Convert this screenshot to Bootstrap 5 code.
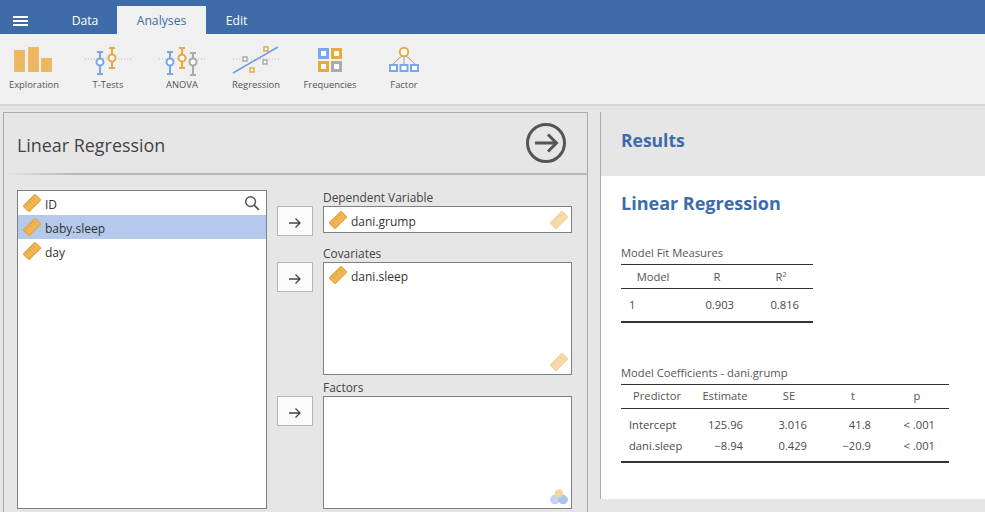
<!DOCTYPE html>
<html lang="en">
<head>
<meta charset="utf-8">
<title>Linear Regression</title>
<link href="https://cdn.jsdelivr.net/npm/bootstrap@5.3.0/dist/css/bootstrap.min.css" rel="stylesheet">
<style>
html,body{height:512px;overflow:hidden}
body{font-family:"Open Sans","Noto Sans",sans-serif;background:#e6e6e6;color:#333;font-size:13px}
.topbar{height:34px;background:#3e6ca8}
.burger{width:54px;padding:16px 0 0 13px;display:flex;flex-direction:column;gap:2px}
.burger span{display:block;width:15px;height:2px;background:#fff}
.tabitem{height:28px;line-height:29px;text-align:center;color:#fff;font-size:12.2px;margin-top:6px}
.tab-data{width:62px}.tab-analyses{width:89px;background:#f0f0f0;color:#3e6ca8;margin-left:1px}.tab-edit{width:60px;padding-left:1px}
.ribbon{height:72px;background:#f0f0f0;border-bottom:2px solid #d5d5d5}
.tool{height:70px;color:#555;font-size:9.4px;text-align:center;line-height:14px}
.tool svg{display:block;margin:10px auto 0}
.t1{width:68px}.t2{width:80px}.t3{width:68px}.t4{width:76px;margin-left:2px}.t5{width:72px}.t6{width:76px}
.work{height:406px;padding-top:6px}
.leftpanel{width:585px;margin-left:3px;border:1px solid #acacac;border-bottom:0;height:400px;overflow:hidden}
.panelhead{height:62px;padding:0 20px 0 13px;border-bottom:2px solid #b8b8b8;border-image:linear-gradient(90deg,#e6e6e6,#b8b8b8 12%) 1}
.paneltitle{font-size:17.9px;color:#444;margin:0;font-weight:400;padding-top:6px}
.panelbody{padding:15px 0 0 13px;gap:10px}
.varlist{width:250px;height:319px;background:#fff;border:1px solid #808080}
.varitem{height:24px;padding-left:5px;gap:4px;font-size:12px;color:#333}
.varname{padding-top:4px}
.varitem.sel{background:#b4c9ec}
.varsearch{margin-left:auto;margin-right:6px}
.assign{display:grid;grid-template-columns:36px 249px;column-gap:10px;align-content:start}
.fieldlabel{grid-column:2;font-size:11.9px;line-height:15px;height:16px;padding-bottom:1px;color:#444}
.mover{width:36px;height:30px;padding:0;border:1px solid #b5b5b5;background:#fafafa;border-radius:0;color:#444;line-height:1}
.mover:hover{background:#fff;border-color:#999}
.dropbox{position:relative;background:#fff;border:1px solid #808080;padding:1px 5px;gap:4px;font-size:12px;align-self:start}
.d1{height:27px}.d2{height:113px}.d3{height:113px}
.gapa{grid-column:1/3;height:10px}.gapb{grid-column:1/3;height:5px}
.iconlift{margin-top:2px}.textlift{margin-top:4px}
.boxmark{position:absolute;right:3px;bottom:3px}
.rightpanel{width:385px;margin-left:12px;border-left:1px solid #acacac;height:387px}
.reshead{height:64px;padding:15px 20px 0;font-size:17.5px;font-weight:700;color:#3e6ca8}
.resbody{height:323px;background:#fff;padding:14px 20px 0}
.restitle{font-size:18px;font-weight:700;color:#3e6ca8;margin:0;line-height:26px}
.restable{font-size:11.2px;color:#4a4a4a;border-collapse:collapse;table-layout:fixed}
.restable caption{caption-side:top;padding:0 0 4px;color:#555;font-size:11.2px;line-height:15px}
.restable th{font-weight:400;border-top:1px solid #333;border-bottom:1px solid #333;text-align:center;height:24px;padding:1px 0 0;color:#555}
.restable td{padding:1px 0 0;text-align:right}
.restable td:first-child{text-align:left;padding-left:8px}
.fit{width:192px;margin-top:29px}
.fit td{height:33px}
.fit td:nth-child(2){padding-right:15px}
.fit td:nth-child(3){padding-right:14px}
.fit tr:last-child td{border-bottom:2px solid #333}
.coef{width:328px;margin-top:42px}
.coef td:nth-child(n+2){padding-right:14px}
.coef tbody tr:first-child td{padding-top:7px;height:27px}
.coef tbody tr:last-child td{padding-top:2px;padding-bottom:5px;height:27px;border-bottom:2px solid #333}
.colm{width:64px}.colp{width:72px}
</style>
</head>
<body>
<svg width="0" height="0" class="d-block position-absolute">
<defs>
<symbol id="ruler" viewBox="0 0 18 18"><g transform="rotate(-45 9 9)"><rect x="0.7" y="4.900" width="16.6" height="8.200" rx="0.8" fill="#f0b655" stroke="#e5a336" stroke-width="1"/><path d="M3.500 5.400v3M6 5.400v2M8.500 5.400v3M11 5.400v2M13.500 5.400v3" stroke="#cf9230" stroke-width=".7" fill="none"/></g></symbol>
</defs>
</svg>
<div class="topbar d-flex">
  <div class="burger"><span></span><span></span><span></span></div>
  <div class="tabitem tab-data">Data</div>
  <div class="tabitem tab-analyses">Analyses</div>
  <div class="tabitem tab-edit">Edit</div>
</div>
<div class="ribbon d-flex">
  <div class="tool t1"><svg width="40" height="34" viewBox="0 0 40 34"><g fill="#ecb75f" stroke="#eabb6c"><rect x="0.500" y="6.500" width="10" height="21"/><rect x="14.500" y="3.500" width="10" height="24"/><rect x="27.500" y="14.500" width="10" height="13"/></g></svg>Exploration</div>
  <div class="tool t2"><svg width="50" height="34" viewBox="0 0 50 34"><path d="M2 15h46" stroke="#bbb" stroke-dasharray="1 2" fill="none"/><g fill="none" stroke-width="2"><path d="M17 8v22M14 8h6M14 30h6" stroke="#7aa3e8"/><circle cx="17" cy="18" r="3.500" fill="#fff" stroke="#7aa3e8"/><path d="M29 4v20M26 4h6M26 24h6" stroke="#e9a93f"/><circle cx="29" cy="14" r="3.500" fill="#fff" stroke="#e9a93f"/></g></svg>T-Tests</div>
  <div class="tool t3"><svg width="50" height="34" viewBox="0 0 50 34"><path d="M2 15h46" stroke="#bbb" stroke-dasharray="1 2" fill="none"/><g fill="none" stroke-width="2"><path d="M13 8v22M10 8h6M10 30h6" stroke="#7aa3e8"/><circle cx="13" cy="18" r="3.500" fill="#fff" stroke="#7aa3e8"/><path d="M25 4v20M22 4h6M22 24h6" stroke="#e9a93f"/><circle cx="25" cy="14" r="3.500" fill="#fff" stroke="#e9a93f"/><path d="M36 9v22M33 9h6M33 31h6" stroke="#aaa"/><circle cx="36" cy="18" r="3.500" fill="#fff" stroke="#aaa"/></g></svg>ANOVA</div>
  <div class="tool t4"><svg width="48" height="34" viewBox="0 0 48 34"><path d="M1 15h46" stroke="#bbb" stroke-dasharray="1 2" fill="none"/><path d="M1 29L46 3" stroke="#6f9be4" stroke-width="1.500" fill="none"/><g fill="#fff" stroke-width="1.500"><rect x="11" y="13" width="4" height="4" stroke="#aaa"/><rect x="31" y="16" width="4" height="4" stroke="#aaa"/><rect x="32" y="3" width="4" height="4" stroke="#e9a93f"/><rect x="18" y="24" width="4" height="4" stroke="#e9a93f"/></g></svg>Regression</div>
  <div class="tool t5"><svg width="26" height="34" viewBox="0 0 26 34"><g fill="#fff" stroke-width="3"><rect x="2.500" y="5.500" width="8" height="8" stroke="#7aa7ec"/><rect x="15.500" y="5.500" width="8" height="8" stroke="#e9a93f"/><rect x="2.500" y="18.500" width="8" height="8" stroke="#e9a93f"/><rect x="15.500" y="18.500" width="8" height="8" stroke="#aaa"/></g></svg>Frequencies</div>
  <div class="tool t6"><svg width="34" height="34" viewBox="0 0 34 34"><path d="M17 10L6 20M17 10v10M17 10l11 10" stroke="#999" fill="none"/><circle cx="17" cy="8" r="4.200" fill="#fff" stroke="#e9a93f" stroke-width="2"/><g fill="#fff" stroke="#7aa7ec" stroke-width="2"><rect x="3" y="21" width="7" height="6"/><rect x="13.500" y="21" width="7" height="6"/><rect x="24" y="21" width="7" height="6"/></g></svg>Factor</div>
</div>
<div class="work d-flex">
  <section class="leftpanel">
    <div class="panelhead d-flex align-items-center justify-content-between">
      <h1 class="paneltitle">Linear Regression</h1>
      <svg width="42" height="42" viewBox="0 0 42 42" fill="none" stroke="#555" stroke-width="3"><circle cx="21" cy="21" r="18.500"/><path d="M10 21h21M23 12.500l8.500 8.500-8.500 8.500"/></svg>
    </div>
    <div class="panelbody d-flex">
      <div class="varlist">
        <div class="varitem d-flex align-items-center"><svg width="18" height="18"><use href="#ruler"/></svg><span class="varname">ID</span><svg class="varsearch" width="16" height="16" viewBox="0 0 17 17" fill="none" stroke="#555" stroke-width="1.500"><circle cx="7" cy="7" r="5.200"/><path d="M10.800 10.800l5 5" stroke-width="2"/></svg></div>
        <div class="varitem sel d-flex align-items-center"><svg width="18" height="18"><use href="#ruler"/></svg><span class="varname">baby.sleep</span></div>
        <div class="varitem d-flex align-items-center"><svg width="18" height="18"><use href="#ruler"/></svg><span class="varname">day</span></div>
      </div>
      <div class="assign">
        <div class="fieldlabel">Dependent Variable</div>
        <button class="btn mover" type="button" aria-label="Move"><svg width="14" height="12" viewBox="0 0 14 12" fill="none" stroke="#444" stroke-width="1.300"><path d="M1 6h11M7.500 1.500L12 6l-4.500 4.500"/></svg></button>
        <div class="dropbox d1 d-flex align-items-center"><svg width="18" height="18"><use href="#ruler"/></svg><span class="varname">dani.grump</span><svg class="boxmark opacity-50" width="18" height="18"><use href="#ruler"/></svg></div>
        <div class="gapa"></div>
        <div class="fieldlabel">Covariates</div>
        <button class="btn mover" type="button" aria-label="Move"><svg width="14" height="12" viewBox="0 0 14 12" fill="none" stroke="#444" stroke-width="1.300"><path d="M1 6h11M7.500 1.500L12 6l-4.500 4.500"/></svg></button>
        <div class="dropbox d2 d-flex align-items-start"><svg width="18" height="18" class="iconlift"><use href="#ruler"/></svg><span class="textlift">dani.sleep</span><svg class="boxmark opacity-50" width="18" height="18"><use href="#ruler"/></svg></div>
        <div class="gapb"></div>
        <div class="fieldlabel">Factors</div>
        <button class="btn mover" type="button" aria-label="Move"><svg width="14" height="12" viewBox="0 0 14 12" fill="none" stroke="#444" stroke-width="1.300"><path d="M1 6h11M7.500 1.500L12 6l-4.500 4.500"/></svg></button>
        <div class="dropbox d3"><svg class="boxmark" width="18" height="18" viewBox="0 0 18 18"><circle cx="5" cy="12.500" r="4.300" fill="#c4d6f3" stroke="#b4ccf0"/><circle cx="13" cy="12.500" r="4.300" fill="#a9c6f0" stroke="#9dbdee"/><circle cx="9" cy="6.500" r="4.300" fill="#f2d59f"/></svg></div>
      </div>
    </div>
  </section>
  <section class="rightpanel">
    <div class="reshead">Results</div>
    <div class="resbody">
      <h2 class="restitle">Linear Regression</h2>
      <table class="restable fit">
        <caption>Model Fit Measures</caption>
        <colgroup><col class="colm"><col class="colm"><col class="colm"></colgroup>
        <thead><tr><th>Model</th><th>R</th><th>R²</th></tr></thead>
        <tbody><tr><td>1</td><td>0.903</td><td>0.816</td></tr></tbody>
      </table>
      <table class="restable coef">
        <caption>Model Coefficients - dani.grump</caption>
        <colgroup><col class="colp"><col class="colm"><col class="colm"><col class="colm"><col class="colm"></colgroup>
        <thead><tr><th>Predictor</th><th>Estimate</th><th>SE</th><th>t</th><th>p</th></tr></thead>
        <tbody>
          <tr><td>Intercept</td><td>125.96</td><td>3.016</td><td>41.8</td><td>&lt; .001</td></tr>
          <tr><td>dani.sleep</td><td>−8.94</td><td>0.429</td><td>−20.9</td><td>&lt; .001</td></tr>
        </tbody>
      </table>
    </div>
  </section>
</div>
<script src="https://cdn.jsdelivr.net/npm/bootstrap@5.3.0/dist/js/bootstrap.bundle.min.js"></script>
</body>
</html>
